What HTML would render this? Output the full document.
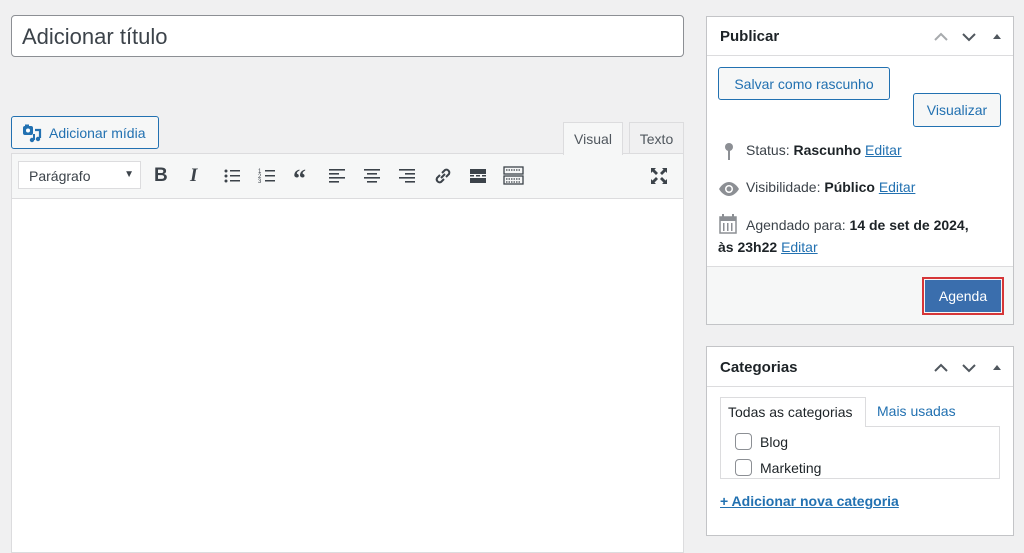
<!DOCTYPE html>
<html><head><meta charset="utf-8"><style>
*{box-sizing:border-box;margin:0;padding:0}
body{width:1024px;height:552px;background:#f0f0f1;font-family:"Liberation Sans",sans-serif;color:#1d2327;position:relative;overflow:hidden;font-size:14px}
.a{position:absolute}
.lnk{color:#2271b1;text-decoration:underline}
.btn{position:absolute;border:1px solid #2271b1;color:#2271b1;background:#f6f7f7;border-radius:3px;font-size:14px;display:flex;align-items:center;justify-content:center}
.box{position:absolute;background:#fff;border:1px solid #c3c4c7}
.hd{position:absolute;left:0;right:0;top:0;border-bottom:1px solid #dcdcde}
.hd b{position:absolute;left:13px;font-size:15px}
.ic{position:absolute;top:176px}
</style></head><body>
<div class="a" style="left:11px;top:15px;width:673px;height:42px;background:#fff;border:1px solid #8c8f94;border-radius:4px;font-size:22px;color:#3c434a;padding:8px 10px">Adicionar título</div>

<div class="btn" style="left:11px;top:116px;width:148px;height:33px;justify-content:flex-start;padding-left:10px">
<svg width="20" height="20" viewBox="0 0 20 20" style="margin-right:7px"><rect x="1" y="3" width="10" height="9" rx="2" fill="#2271b1"/><rect x="3" y="1.5" width="4" height="3" fill="#2271b1"/><circle cx="6" cy="7.5" r="2" fill="#fff"/><path d="M13 7h5v8" stroke="#2271b1" stroke-width="2.2" fill="none"/><circle cx="16" cy="16" r="2.2" fill="#2271b1"/><circle cx="10" cy="17" r="2.2" fill="#2271b1"/><path d="M12 17v-6" stroke="#2271b1" stroke-width="2"/></svg>Adicionar mídia</div>

<div class="a" style="left:563px;top:122px;width:60px;height:33px;background:#f6f7f7;border:1px solid #dcdcde;border-bottom:none;font-size:14px;color:#50575e;padding-top:8px;text-align:center;z-index:2">Visual</div>
<div class="a" style="left:629px;top:122px;width:55px;height:32px;background:#f0f0f1;border:1px solid #dcdcde;font-size:14px;color:#50575e;padding-top:8px;text-align:center">Texto</div>

<div class="a" style="left:11px;top:153px;width:673px;height:400px;background:#fff;border:1px solid #dcdcde"></div>
<div class="a" style="left:12px;top:154px;width:671px;height:45px;background:#f6f7f7;border-bottom:1px solid #dcdcde"></div>
<div class="a" style="left:18px;top:161px;width:123px;height:28px;background:#fff;border:1px solid #dcdcde;font-size:14px;color:#3c434a;padding:6px 0 0 10px">Parágrafo<span style="position:absolute;right:6px;top:7px;font-size:10px">▼</span></div>

<div class="ic" style="left:154px;top:165px;font-size:19px;font-weight:bold;color:#3c434a">B</div>
<div class="ic" style="left:190px;top:165px;font-size:19px;font-style:italic;font-family:'Liberation Serif',serif;font-weight:bold;color:#3c434a">I</div>
<svg class="a" style="left:223px;top:167px" width="18" height="18" viewBox="0 0 18 18" fill="#3c434a"><circle cx="3" cy="4" r="1.5"/><circle cx="3" cy="9" r="1.5"/><circle cx="3" cy="14" r="1.5"/><rect x="7" y="3" width="10" height="1.5"/><rect x="7" y="8" width="10" height="1.5"/><rect x="7" y="13" width="10" height="1.5"/></svg>
<svg class="a" style="left:258px;top:167px" width="18" height="18" viewBox="0 0 18 18" fill="#3c434a"><text x="0" y="6" font-size="6">1</text><text x="0" y="11" font-size="6">2</text><text x="0" y="16" font-size="6">3</text><rect x="7" y="3" width="10" height="1.5"/><rect x="7" y="8" width="10" height="1.5"/><rect x="7" y="13" width="10" height="1.5"/></svg>
<div class="ic" style="left:293px;top:164px;font-size:26px;font-weight:bold;color:#3c434a;font-family:'Liberation Serif',serif">“</div>
<svg class="a" style="left:328px;top:167px" width="18" height="18" viewBox="0 0 18 18" fill="#3c434a"><rect x="1" y="2" width="16" height="1.6"/><rect x="1" y="6" width="10" height="1.6"/><rect x="1" y="10" width="16" height="1.6"/><rect x="1" y="14" width="10" height="1.6"/></svg>
<svg class="a" style="left:363px;top:167px" width="18" height="18" viewBox="0 0 18 18" fill="#3c434a"><rect x="1" y="2" width="16" height="1.6"/><rect x="4" y="6" width="10" height="1.6"/><rect x="1" y="10" width="16" height="1.6"/><rect x="4" y="14" width="10" height="1.6"/></svg>
<svg class="a" style="left:398px;top:167px" width="18" height="18" viewBox="0 0 18 18" fill="#3c434a"><rect x="1" y="2" width="16" height="1.6"/><rect x="7" y="6" width="10" height="1.6"/><rect x="1" y="10" width="16" height="1.6"/><rect x="7" y="14" width="10" height="1.6"/></svg>
<svg class="a" style="left:433px;top:166px" width="20" height="20" viewBox="0 0 20 20" fill="none" stroke="#3c434a" stroke-width="2"><path d="M9 7l3-3a3 3 0 014 4l-3 3M11 13l-3 3a3 3 0 01-4-4l3-3M8 12l4-4"/></svg>
<svg class="a" style="left:469px;top:167px" width="18" height="18" viewBox="0 0 18 18" fill="#3c434a"><rect x="1" y="2" width="16" height="5"/><rect x="1" y="8" width="4" height="1.5"/><rect x="7" y="8" width="4" height="1.5"/><rect x="13" y="8" width="4" height="1.5"/><rect x="1" y="11" width="16" height="5"/></svg>
<svg class="a" style="left:503px;top:166px" width="21" height="20" viewBox="0 0 21 20" fill="none" stroke="#3c434a" stroke-width="1.3"><rect x="1" y="1" width="19" height="7"/><rect x="1" y="10" width="19" height="8"/><path d="M3 4h15M3 13h15M3 16h15" stroke-dasharray="1.5 1"/></svg>
<svg class="a" style="left:650px;top:167px" width="18" height="18" viewBox="0 0 18 18" fill="#3c434a"><path d="M1 1h5L4.5 2.5 8 6 6 8 2.5 4.5 1 6zM17 1v5l-1.5-1.5L12 8 10 6l3.5-3.5L12 1zM1 17v-5l1.5 1.5L6 10l2 2-3.5 3.5L6 17zM17 17h-5l1.5-1.5L10 12l2-2 3.5 3.5L17 12z"/></svg>

<!-- Publicar -->
<div class="box" style="left:706px;top:16px;width:308px;height:309px">
<div class="hd" style="height:39px;top:0"><b style="top:11px">Publicar</b></div>
<svg class="a" style="left:226px;top:13px" width="80" height="14" viewBox="0 0 80 14" fill="none" stroke-width="2"><path d="M2 10l6-6 6 6" stroke="#a7aaad"/><path d="M30 4l6 6 6-6" stroke="#50575e"/><path d="M60 9l4-5 4 5z" fill="#50575e" stroke="none"/></svg>
<div class="btn" style="left:11px;top:50px;width:172px;height:33px">Salvar como rascunho</div>
<div class="btn" style="left:206px;top:76px;width:88px;height:34px">Visualizar</div>
<svg class="a" style="left:16px;top:125px" width="12" height="20" viewBox="0 0 12 20" fill="#8c8f94"><circle cx="6" cy="5" r="4"/><rect x="5" y="7" width="2" height="11"/></svg>
<div class="a" style="left:39px;top:125px;color:#3c434a">Status: <b style="color:#1d2327">Rascunho</b> <span class="lnk">Editar</span></div>
<svg class="a" style="left:11px;top:164px" width="22" height="16" viewBox="0 0 22 16"><path d="M1 8c3-5 7-7 10-7s7 2 10 7c-3 5-7 7-10 7S4 13 1 8z" fill="#8c8f94"/><circle cx="11" cy="8" r="4" fill="#fff"/><circle cx="11" cy="8" r="2.5" fill="#8c8f94"/></svg>
<div class="a" style="left:39px;top:162px;color:#3c434a">Visibilidade: <b style="color:#1d2327">Público</b> <span class="lnk">Editar</span></div>
<svg class="a" style="left:12px;top:197px" width="18" height="20" viewBox="0 0 18 20" fill="#8c8f94"><rect x="1" y="3" width="16" height="16" fill="none" stroke="#8c8f94" stroke-width="1.5"/><rect x="1" y="3" width="16" height="4"/><rect x="3" y="0" width="2" height="5"/><rect x="13" y="0" width="2" height="5"/><rect x="4" y="9" width="1.5" height="8"/><rect x="8" y="9" width="1.5" height="8"/><rect x="12" y="9" width="1.5" height="8"/></svg>
<div class="a" style="left:39px;top:200px;color:#3c434a;width:260px">Agendado para: <b style="color:#1d2327">14 de set de 2024,</b></div>
<div class="a" style="left:11px;top:222px;color:#3c434a"><b style="color:#1d2327">às 23h22</b> <span class="lnk">Editar</span></div>
<div class="a" style="left:0;top:249px;width:306px;height:58px;background:#f6f7f7;border-top:1px solid #dcdcde"></div>
<div class="a" style="left:215px;top:260px;width:82px;height:38px;border:2px solid #d63638;padding:1px"><div style="background:#3a6ead;height:100%;color:#fff;display:flex;align-items:center;justify-content:center;font-size:14px">Agenda</div></div>
</div>

<!-- Categorias -->
<div class="box" style="left:706px;top:346px;width:308px;height:190px">
<div class="hd" style="height:40px"><b style="top:12px">Categorias</b></div>
<svg class="a" style="left:226px;top:14px" width="80" height="14" viewBox="0 0 80 14" fill="none" stroke-width="2"><path d="M2 10l6-6 6 6" stroke="#50575e"/><path d="M30 4l6 6 6-6" stroke="#50575e"/><path d="M60 9l4-5 4 5z" fill="#50575e" stroke="none"/></svg>
<div class="a" style="left:13px;top:79px;width:280px;height:53px;border:1px solid #dcdcde"></div>
<div class="a" style="left:13px;top:50px;width:146px;height:30px;border:1px solid #dcdcde;border-bottom:none;background:#fff;padding:6px 0 0 7px;color:#1d2327">Todas as categorias</div>
<div class="a" style="left:170px;top:56px;color:#2271b1">Mais usadas</div>
<div class="a" style="left:28px;top:86px;width:17px;height:17px;border:1px solid #8c8f94;border-radius:4px"></div>
<div class="a" style="left:53px;top:87px;color:#1d2327">Blog</div>
<div class="a" style="left:28px;top:112px;width:17px;height:17px;border:1px solid #8c8f94;border-radius:4px"></div>
<div class="a" style="left:53px;top:113px;color:#1d2327">Marketing</div>
<div class="a lnk" style="left:13px;top:146px;font-weight:bold">+ Adicionar nova categoria</div>
</div>
</body></html>
